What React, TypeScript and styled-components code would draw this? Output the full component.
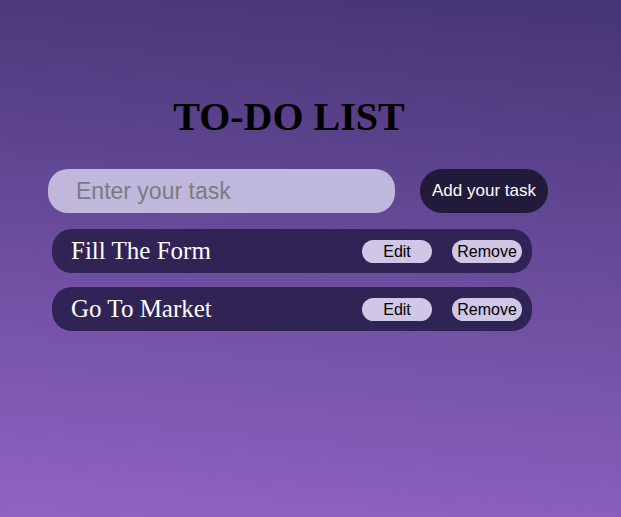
import React, { useState } from 'react';
import styled, { createGlobalStyle } from 'styled-components';

const GlobalStyle = createGlobalStyle`
    html, body {
        margin: 0;
        padding: 0;
    }

    body {
        min-height: 100vh;
        background: linear-gradient(185deg, #453574 0%, #9063c4 100%);
        font-family: "Liberation Serif", "Times New Roman", serif;
    }
`;

const Page = styled.main`
    min-height: 100vh;
    padding-top: 93px;
    box-sizing: border-box;
`;

const Title = styled.h1`
    margin: 0 0 29px 0;
    width: 578px;
    text-align: center;
    font-family: "Liberation Serif", "Times New Roman", serif;
    font-size: 40px;
    font-weight: bold;
    color: #000;
`;

const InputRow = styled.form`
    display: flex;
    align-items: center;
    gap: 25px;
    margin: 0 0 16px 48px;
`;

const TaskInput = styled.input`
    width: 347px;
    height: 44px;
    box-sizing: border-box;
    border: none;
    outline: none;
    border-radius: 20px;
    background: #bfb7dc;
    padding: 0 0 0 28px;
    font-family: "Liberation Sans", Arial, sans-serif;
    font-size: 23px;
    color: #222;

    &::placeholder {
        color: #7b7b80;
    }
`;

const AddButton = styled.button`
    height: 44px;
    padding: 0 12px;
    border: none;
    border-radius: 22px;
    background: #221a3b;
    color: #fff;
    font-family: "Liberation Sans", Arial, sans-serif;
    font-size: 17px;
    cursor: pointer;
`;

const TaskList = styled.ul`
    list-style: none;
    margin: 0 0 0 52px;
    padding: 0;
    display: flex;
    flex-direction: column;
    gap: 14px;
`;

const TaskItem = styled.li`
    width: 480px;
    height: 44px;
    box-sizing: border-box;
    display: flex;
    align-items: center;
    padding: 0 10px 0 19px;
    border-radius: 20px;
    background: #302456;
`;

const TaskText = styled.span`
    flex: 1;
    color: #fff;
    font-family: "Liberation Serif", "Times New Roman", serif;
    font-size: 25px;
`;

const Actions = styled.div`
    display: flex;
    gap: 20px;
`;

const SmallButton = styled.button`
    width: 70px;
    height: 23px;
    padding: 0;
    border: none;
    border-radius: 12px;
    background: #d0c6e6;
    color: #000;
    font-family: "Liberation Sans", Arial, sans-serif;
    font-size: 16px;
    line-height: 23px;
    cursor: pointer;
`;

type Task = { id: number; text: string };

export default function App() {
    const [tasks, setTasks] = useState<Task[]>([
        { id: 1, text: 'Fill The Form' },
        { id: 2, text: 'Go To Market' },
    ]);
    const [value, setValue] = useState('');

    const addTask = (e: React.FormEvent) => {
        e.preventDefault();
        if (!value.trim()) return;
        setTasks([...tasks, { id: Date.now(), text: value.trim() }]);
        setValue('');
    };

    return (<Page>
        <GlobalStyle />
        <Title>TO-DO LIST</Title>
        <InputRow onSubmit={addTask}>
            <TaskInput placeholder="Enter your task" value={value} onChange={e => setValue(e.target.value)} />
            <AddButton type="submit">Add your task</AddButton>
        </InputRow>
        <TaskList>
            {tasks.map(task => (<TaskItem key={task.id}>
                <TaskText>{task.text}</TaskText>
                <Actions>
                    <SmallButton>Edit</SmallButton>
                    <SmallButton onClick={() => setTasks(tasks.filter(t => t.id !== task.id))}>Remove</SmallButton>
                </Actions>
            </TaskItem>))}
        </TaskList>
    </Page>);
}
